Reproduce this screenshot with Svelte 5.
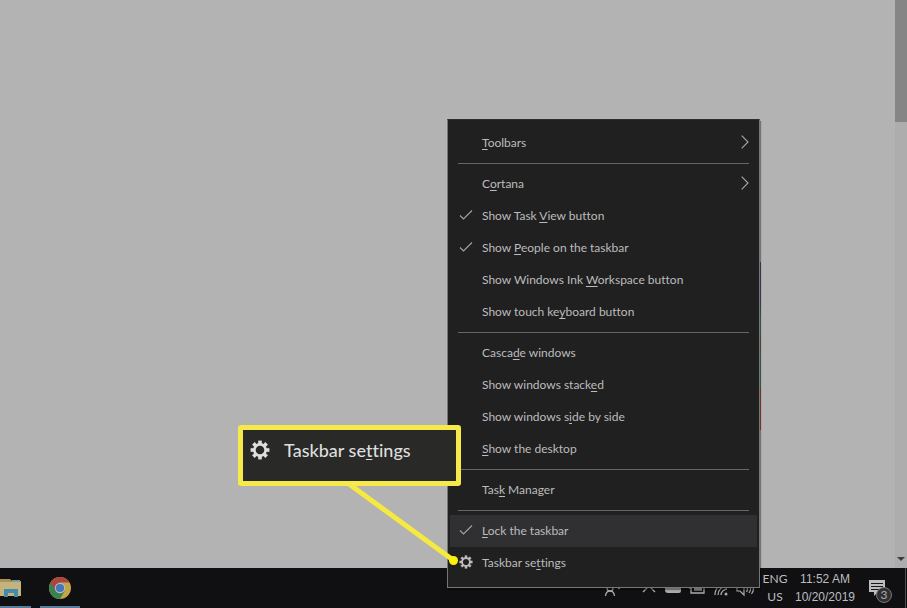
<script>
  const groups = [
    [{ label: ['', 'T', 'oolbars'], submenu: true }],
    [
      { label: ['C', 'o', 'rtana'], submenu: true },
      { label: ['Show Task ', 'V', 'iew button'], checked: true },
      { label: ['Show ', 'P', 'eople on the taskbar'], checked: true },
      { label: ['Show Windows Ink ', 'W', 'orkspace button'] },
      { label: ['Show touch ke', 'y', 'board button'] }
    ],
    [
      { label: ['Casca', 'd', 'e windows'] },
      { label: ['Show windows stack', 'e', 'd'] },
      { label: ['Show windows s', 'i', 'de by side'] },
      { label: ['', 'S', 'how the desktop'] }
    ],
    [{ label: ['Tas', 'k', ' Manager'] }],
    [
      { label: ['', 'L', 'ock the taskbar'], checked: true, active: true },
      { label: ['Taskbar se', 't', 'tings'], gear: true }
    ]
  ];
  const teeth = [0, 45, 90, 135, 180, 225, 270, 315];
</script>

{#snippet gear()}
  <svg class="gear" viewBox="0 0 20 20" aria-hidden="true">
    <circle cx="10" cy="10" r="5.6" fill="none" stroke="currentColor" stroke-width="2.6" />
    {#each teeth as angle}
      <rect x="8.2" y="0.6" width="3.6" height="3.8" fill="currentColor" transform="rotate({angle} 10 10)" />
    {/each}
  </svg>
{/snippet}

<div class="screen">
  <main class="desktop">
    <div class="page"></div>
    <div class="scrollbar">
      <div class="thumb"></div>
      <svg class="down" viewBox="0 0 8 4" aria-hidden="true"><path d="M0 0h8L4 4z" fill="#3c3c3e" /></svg>
    </div>
  </main>

  <footer class="taskbar">
    <div class="apps">
      <button class="app explorer" aria-label="File Explorer">
        <svg width="22" height="20" viewBox="0 0 22 20">
          <path d="M0 1h10l2 2h9v15H0z" fill="#a8935a" />
          <path d="M12 2h8v2h-8z" fill="#7d9c97" />
          <path d="M0 4h21v14H0z" fill="#c4b37a" />
          <path d="M4 19v-8h14v8h-4v-4H8v4z" fill="#438caf" />
        </svg>
      </button>
      <button class="app chrome" aria-label="Google Chrome">
        <svg width="22" height="22" viewBox="0 0 22 22">
          <circle cx="11" cy="11" r="11" fill="#c2a548" />
          <path d="M1.5 5.5A11 11 0 0 0 11 22l4.8-8.2L11 11z" fill="#3a8150" />
          <path d="M1.500 5.500A11 11 0 0 1 20.500 5.500H11L6.200 13.800z" fill="#ab463e" />
          <circle cx="11" cy="11" r="5.2" fill="#b5bcc2" />
          <circle cx="11" cy="11" r="4.1" fill="#4476b9" />
        </svg>
      </button>
    </div>

    <div class="tray">
      <button class="icon people" aria-label="People">
        <svg viewBox="0 0 24 24" fill="none" stroke="currentColor" stroke-width="1.3">
          <circle cx="11" cy="12" r="3" /><path d="M6.5 20c.3-3 2-5 4.500-5s4.200 2 4.500 5M19 13l2-1" />
        </svg>
      </button>
      <button class="icon" aria-label="Show hidden icons">
        <svg viewBox="0 0 24 24" fill="none" stroke="currentColor" stroke-width="1.3"><path d="m6 16 6-6 6 6" /></svg>
      </button>
      <button class="icon" aria-label="OneDrive">
        <svg viewBox="0 0 24 24" fill="currentColor"><path d="M4 12a4 4 0 0 1 4-3 5 5 0 0 1 8 0 4 4 0 0 1 4 4v2q0 2-2 2H7q-3 0-3-3z" /></svg>
      </button>
      <button class="icon" aria-label="Battery">
        <svg viewBox="0 0 24 24" fill="none" stroke="currentColor" stroke-width="1.3">
          <path d="M6 8h13v9H6zM4 12h3" /><path d="M9 10h8v4.500H9z" fill="currentColor" stroke="none" />
        </svg>
      </button>
      <button class="icon" aria-label="Network">
        <svg viewBox="0 0 24 24" fill="none" stroke="currentColor" stroke-width="1.3">
          <path d="M6 19C6 12 11 7 18 7M9 19c0-5 4-9 9-9M12 19c0-3 3-6 6-6" /><circle cx="17" cy="18" r="1.500" fill="currentColor" stroke="none" />
        </svg>
      </button>
      <button class="icon" aria-label="Volume">
        <svg viewBox="0 0 24 24" fill="none" stroke="currentColor" stroke-width="1.2">
          <path d="M4 10h3l4-4v13l-4-4H4zM13.500 10q2 3 0 6M16 8q3 5 0 9M18.500 6q4 7 0 12" />
        </svg>
      </button>
      <button class="lang"><span>ENG</span><span>US</span></button>
      <button class="clock"><span>11:52 AM</span><span>10/20/2019</span></button>
      <button class="notify" aria-label="3 notifications">
        <svg viewBox="0 0 16 16" aria-hidden="true">
          <path d="M0 0h16v12H9l-4 4v-4H0z" fill="#bdbdc0" />
          <path d="M2 3.500h12M2 6.500h12M2 9.500h8" stroke="#17171a" stroke-width="1" />
        </svg>
        <span class="badge">3</span>
      </button>
      <span class="peek"></span>
    </div>
  </footer>

  <div class="menu" role="menu" aria-label="Taskbar">
    {#each groups as group, g}
      {#if g > 0}<hr />{/if}
      {#each group as item}
        <button class="item" class:active={item.active} role="menuitem">
          <span class="mark">
            {#if item.checked}
              <svg class="check" viewBox="0 0 14 10" aria-hidden="true"><path d="m1 5.500 3.500 3.500L13 .5" fill="none" stroke="currentColor" stroke-width="1.100" /></svg>
            {:else if item.gear}
              {@render gear()}
            {/if}
          </span>
          <span class="label">{item.label[0]}<u>{item.label[1]}</u>{item.label[2]}</span>
          {#if item.submenu}
            <svg class="arrow" viewBox="0 0 8 14" aria-hidden="true"><path d="m.7.7 6.300 6.300-6.300 6.300" fill="none" stroke="currentColor" stroke-width="1.100" /></svg>
          {/if}
        </button>
      {/each}
    {/each}
    <span class="fringe"></span>
  </div>

  <svg class="pointer" width="112" height="84" viewBox="0 0 112 84" aria-hidden="true">
    <path d="M2 2 106 78" stroke="#f6e93f" stroke-width="5" />
    <circle cx="106.500" cy="78.500" r="4.500" fill="#fff200" />
  </svg>
  <div class="callout">
    {@render gear()}
    <span>Taskbar se<u>t</u>tings</span>
  </div>
</div>

<style>
  :global(body) { margin: 0; }
  .screen {
    position: relative;
    display: flex;
    flex-direction: column;
    height: 100vh;
    overflow: hidden;
    background: #b3b3b3;
    font-family: Lato, "Open Sans", sans-serif;
    font-size: 12px;
    font-variant-ligatures: none;
    color: #bcbcbc;
  }
  button {
    margin: 0;
    padding: 0;
    border: 0;
    background: none;
    color: inherit;
    font: inherit;
    font-variant-ligatures: none;
  }
  u { text-decoration: underline; text-underline-offset: 2px; text-decoration-thickness: 1px; text-decoration-skip-ink: none; }

  .desktop { display: flex; flex: 1; }
  .page { flex: 1; }
  .scrollbar {
    display: flex;
    flex-direction: column;
    justify-content: space-between;
    align-items: center;
    width: 12px;
    padding-bottom: 7px;
    background: #adadae;
  }
  .thumb { width: 100%; height: 122px; background: #858586; }
  .down { width: 8px; height: 4px; }

  .taskbar {
    display: flex;
    justify-content: space-between;
    height: 40px;
    background: #101012;
  }
  .apps { display: flex; gap: 9px; }
  .app { display: flex; align-items: center; height: 40px; box-sizing: border-box; border-bottom: 2px solid #587d9b; padding-top: 2px; }
  .explorer { width: 31px; }
  .chrome { width: 40px; justify-content: center; }

  .tray { display: flex; align-items: center; color: #aaaaad; }
  .icon { width: 24px; height: 24px; }
  .icon svg { display: block; width: 24px; height: 24px; }
  .people { margin-right: 14px; }
  .lang, .clock { display: flex; flex-direction: column; align-items: center; line-height: 18px; color: #bdbdc0; }
  .lang { width: 36px; }
  .clock { width: 64px; font-family: "Liberation Sans", Arial, sans-serif; }
  .notify { position: relative; width: 40px; height: 40px; margin-right: 8px; }
  .notify svg { display: block; width: 16px; height: 16px; margin: 0 12px; }
  .badge {
    position: absolute;
    right: 5px;
    bottom: 5px;
    width: 14px;
    height: 14px;
    border: 1px solid #77777a;
    border-radius: 50%;
    background: #303033;
    font-size: 12px;
    line-height: 14px;
    text-align: center;
  }
  .peek { width: 2px; height: 40px; box-sizing: border-box; border-left: 1px solid #4c4c4f; }

  .menu {
    position: absolute;
    right: 147px;
    bottom: 20px;
    width: 313px;
    box-sizing: border-box;
    padding: 7px 2px 8px;
    border: 1px solid #767677;
    border-top-color: #2c2c2d;
    background: #202021;
    box-shadow: 1px 2px 1px rgba(0, 0, 0, 0.35);
  }
  .item { display: flex; align-items: center; width: 100%; height: 32px; padding: 0 8px 2px; text-align: left; }
  .active { background: #303032; }
  .mark { display: flex; align-items: center; justify-content: center; width: 16px; margin-right: 8px; }
  .label { flex: 1; white-space: nowrap; }
  .check { width: 14px; height: 10px; color: #a2a2a2; }
  .arrow { width: 8px; height: 14px; color: #a8a8a8; }
  .gear { width: 14px; height: 14px; }
  hr { height: 1px; margin: 4px 8px; border: 0; background: #666667; }
  .fringe {
    position: absolute;
    right: -2px;
    bottom: 157px;
    width: 1px;
    height: 168px;
    background: linear-gradient(#35334f, #343b4c 25%, #2d5a47 35%, #584038 50%, #2d5a47 60%, #2d5a47 75%, #74302c 76%, #74302c);
  }

  .pointer { position: absolute; right: 448px; bottom: 42px; }
  .callout {
    position: absolute;
    right: 446px;
    bottom: 122px;
    display: flex;
    align-items: center;
    gap: 14px;
    width: 223px;
    height: 61px;
    box-sizing: border-box;
    padding: 0 7px 11px;
    border: 5px solid #f6e94a;
    border-radius: 3px;
    background: #292927;
    color: #dedede;
    font-size: 18px;
    font-weight: 500;
    white-space: nowrap;
  }
  .callout .gear { width: 20px; height: 20px; }
</style>
